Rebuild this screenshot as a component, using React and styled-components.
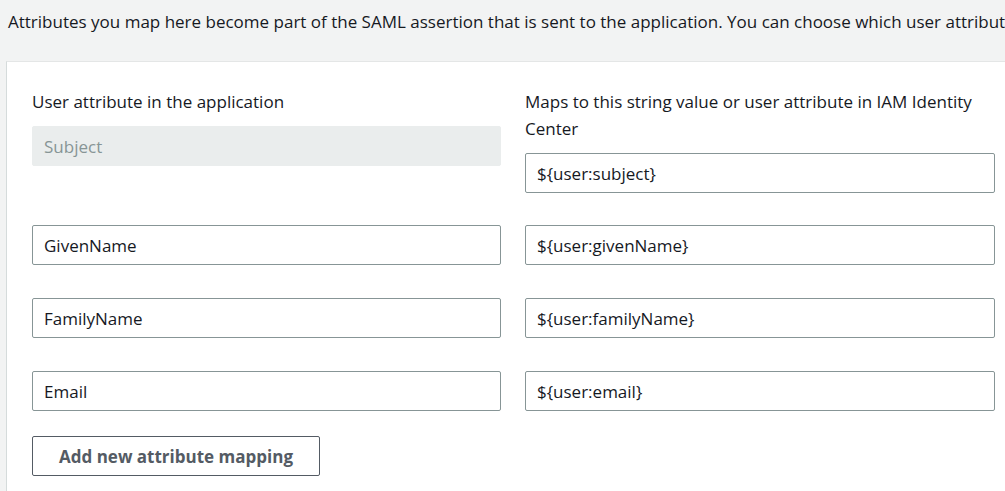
import React from "react";
import styled, { createGlobalStyle } from "styled-components";

const Global = createGlobalStyle`
  html, body { margin: 0; padding: 0; background: #f2f3f3; }
  body { font-family: "Open Sans", "Noto Sans", Arial, sans-serif; color: #16191f; }
`;

const Page = styled.div`
  width: 1005px;
  height: 491px;
  overflow: hidden;
  background: #f2f3f3;
`;

const Intro = styled.p`
  margin: 0;
  padding: 9px 0 0 8px;
  height: 61px;
  box-sizing: border-box;
  font-size: 17px;
  line-height: 26px;
  white-space: nowrap;
  color: #16191f;
`;

const Panel = styled.section`
  margin-left: 6px;
  background: #fff;
  border-top: 1px solid #e4e6e6;
  border-left: 1px solid #d5dbdb;
  padding: 26px 10px 0 25px;
  height: 430px;
  box-sizing: border-box;
`;

const Row = styled.div`
  display: grid;
  grid-template-columns: 469px 470px;
  column-gap: 24px;
  margin-bottom: ${(p) => (p.$first ? "32px" : "33px")};
`;

const Field = styled.div`
  display: flex;
  flex-direction: column;
  gap: 11px;
`;

const Label = styled.label`
  font-size: 17px;
  line-height: 27px;
  color: #16191f;
`;

const Input = styled.div`
  height: 40px;
  box-sizing: border-box;
  border: 1px solid ${(p) => (p.$disabled ? "#eaeded" : "#879596")};
  background: ${(p) => (p.$disabled ? "#eaeded" : "#fff")};
  color: ${(p) => (p.$disabled ? "#879596" : "#16191f")};
  border-radius: 2px;
  padding: 0 11px;
  display: flex;
  align-items: center;
  font-size: 17px;
`;

const Button = styled.button`
  margin-top: -8px;
  width: 288px;
  height: 40px;
  border: 1px solid #545b64;
  border-radius: 2px;
  background: #fff;
  color: #545b64;
  font-family: inherit;
  font-weight: 700;
  font-size: 17px;
  padding: 0;
  cursor: pointer;
`;

const rows = [
  ["GivenName", "${user:givenName}"],
  ["FamilyName", "${user:familyName}"],
  ["Email", "${user:email}"],
];

export default function App() {
  return (
    <Page>
      <Global />
      <Intro>
        Attributes you map here become part of the SAML assertion that is sent to the application. You can choose which user attributes
      </Intro>
      <Panel>
        <Row $first>
          <Field>
            <Label>User attribute in the application</Label>
            <Input $disabled>Subject</Input>
          </Field>
          <Field>
            <Label>Maps to this string value or user attribute in IAM Identity Center</Label>
            <Input>{"${user:subject}"}</Input>
          </Field>
        </Row>
        {rows.map(([a, b]) => (
          <Row key={a}>
            <Input>{a}</Input>
            <Input>{b}</Input>
          </Row>
        ))}
        <Button>Add new attribute mapping</Button>
      </Panel>
    </Page>
  );
}
